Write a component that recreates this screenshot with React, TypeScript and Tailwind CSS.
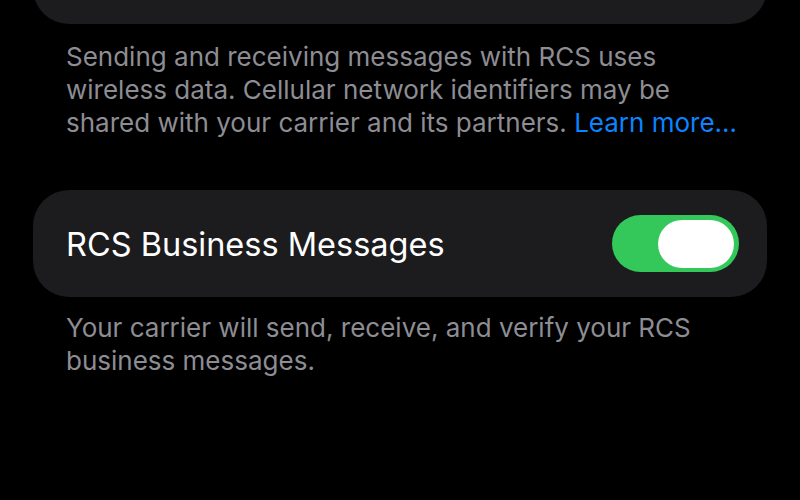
import React, { useState } from "react";

const Toggle: React.FC<{ on: boolean; onChange: () => void }> = ({ on, onChange }) => (
  <button
    onClick={onChange}
    className={`flex h-[57px] w-[127px] items-center rounded-full p-[5px] ${on ? "justify-end bg-[#34c759]" : "justify-start bg-[#39393d]"}`}
  >
    <span className="h-[48px] w-[76px] rounded-full bg-white" />
  </button>
);

const App: React.FC = () => {
  const [business, setBusiness] = useState(true);

  return (
    <div
      className="h-[500px] w-[800px] overflow-hidden bg-black px-[33px]"
      style={{ fontFamily: "Inter, 'Noto Sans', sans-serif" }}
    >
      {/* card cut off at the top */}
      <div className="-mt-[56px] h-[80px] rounded-[36px] bg-[#1c1c1e]" />

      <p className="mt-[16px] whitespace-nowrap px-[33px] text-[26px] leading-[33px] text-[#8d8d93]">
        Sending and receiving messages with RCS uses
        <br />
        wireless data. Cellular network identifiers may be
        <br />
        shared with your carrier and its partners.{" "}
        <span className="text-[#0a84ff]">Learn more…</span>
      </p>

      <div className="mt-[51px] flex h-[107px] items-center justify-between rounded-[36px] bg-[#1c1c1e] pl-[33px] pr-[28px]">
        <span className="pt-[4px] text-[32.5px] text-white">RCS Business Messages</span>
        <Toggle on={business} onChange={() => setBusiness(!business)} />
      </div>

      <p className="mt-[14px] whitespace-nowrap px-[33px] text-[26px] leading-[33px] text-[#8d8d93]">
        Your carrier will send, receive, and verify your RCS
        <br />
        business messages.
      </p>
    </div>
  );
};

export default App;
